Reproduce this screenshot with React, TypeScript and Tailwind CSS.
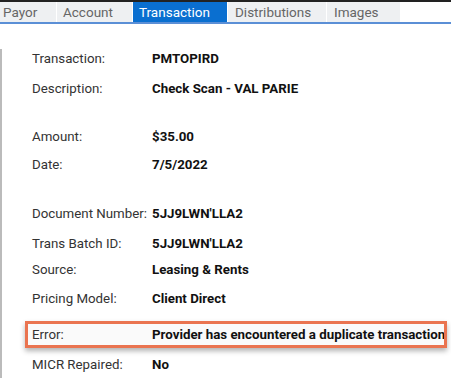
import React from "react";

const tabs = ["Payor", "Account", "Transaction", "Distributions", "Images"];
const tabWidths = ["w-[57px]", "w-[76px]", "w-[95px]", "w-[99px]", "w-[74px]"];

function Row({ label, value, className = "" }: { label: string; value: string; className?: string }) {
  return (
    <div className={`flex items-center h-5 pl-[30px] ${className}`}>
      <div className="w-[120px] shrink-0 text-[#333]">{label}</div>
      <div className="font-bold text-[#111]">{value}</div>
    </div>
  );
}

export default function App() {
  return (
    <div
      className="w-[451px] h-[378px] bg-white overflow-hidden text-[13.3px]"
      style={{ fontFamily: "Roboto, 'Liberation Sans', sans-serif" }}
    >
      <div className="h-[2px] bg-[#222]" />
      {/* tabs */}
      <div className="flex h-[22px] border-b-2 border-[#5b8fd6]">
        {tabs.map((t, i) => (
          <div
            key={t}
            className={`${tabWidths[i]} flex items-center pl-[3px] pr-2 border-r border-white text-[13.5px] ${
              t === "Transaction"
                ? "bg-[#0a6fd0] text-white pl-[6px]"
                : "bg-[#eef0f2] text-[#666]"
            } ${i === 1 ? "pl-[6px]" : ""} ${i >= 3 ? "pl-[7px]" : ""}`}
          >
            {t}
          </div>
        ))}
        <div className="flex-1" />
      </div>
      {/* body */}
      <div className="mt-[3px] h-[350px] border-l-2 border-[#bbb]">
        <Row label="Transaction:" value="PMTOPIRD" className="mt-[25px]" />
        <Row label="Description:" value="Check Scan - VAL PARIE" className="mt-[10px]" />
        <Row label="Amount:" value="$35.00" className="mt-[28px]" />
        <Row label="Date:" value="7/5/2022" className="mt-[8px]" />
        <Row label="Document Number:" value="5JJ9LWN'LLA2" className="mt-[29px]" />
        <Row label="Trans Batch ID:" value="5JJ9LWN'LLA2" className="mt-[10px]" />
        <Row label="Source:" value="Leasing & Rents" className="mt-[6px]" />
        <Row label="Pricing Model:" value="Client Direct" className="mt-[9px]" />
        <div className="mt-[12px] ml-[23px] w-[422px] h-[27px] border-[3px] border-[#ea7450] shadow-[0_3px_5px_rgba(0,0,0,0.3)] bg-[#fafafa] flex items-center pl-[4px] overflow-hidden whitespace-nowrap">
          <div className="w-[120px] shrink-0 text-[#333]">Error:</div>
          <div className="font-bold text-[#111]">Provider has encountered a duplicate transaction</div>
        </div>
        <Row label="MICR Repaired:" value="No" className="mt-[7px]" />
      </div>
    </div>
  );
}
